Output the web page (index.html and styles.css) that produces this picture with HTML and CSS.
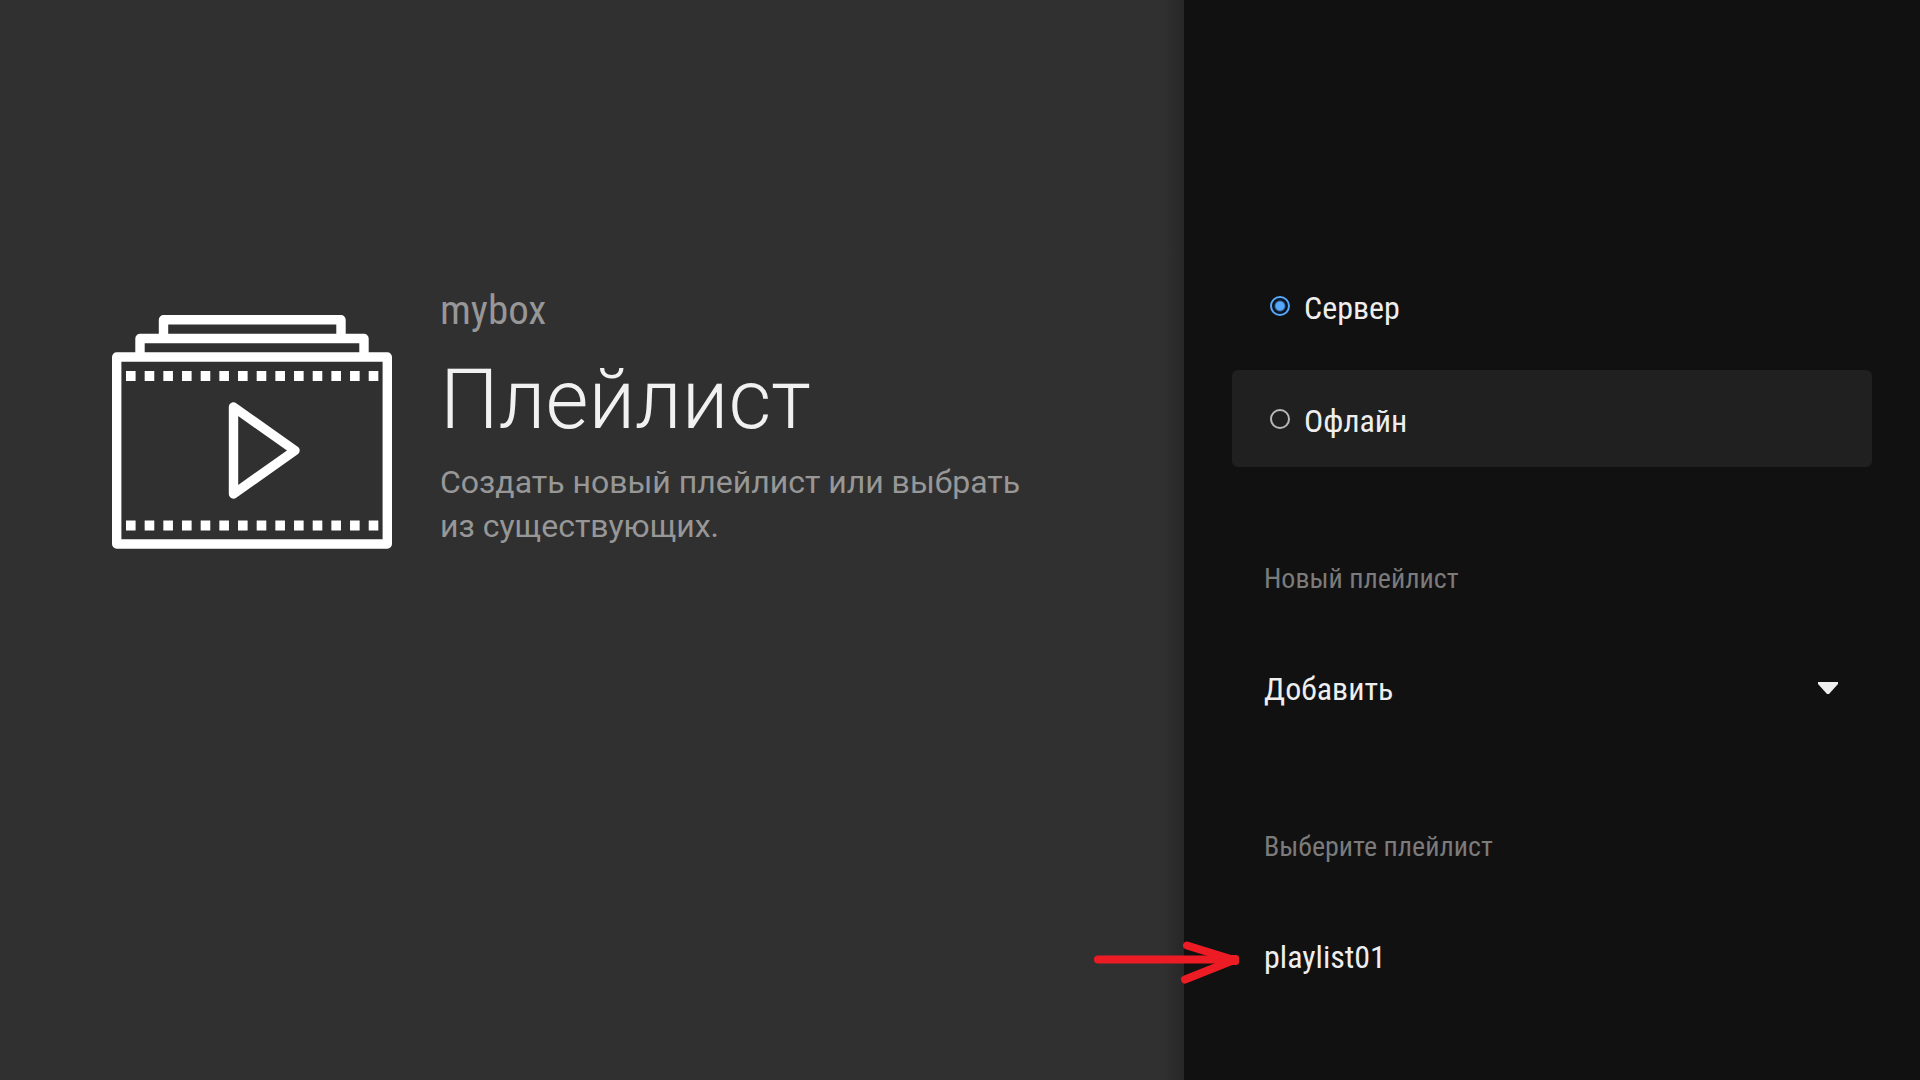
FILE: index.html
```html
<!DOCTYPE html>
<html lang="ru">
<head>
<meta charset="utf-8">
<meta name="viewport" content="width=device-width, initial-scale=1">
<title>Плейлист</title>
<link rel="stylesheet" href="styles.css">
</head>
<body>
<main class="screen">
  <section class="guidance">
    <svg class="guidance-icon" viewBox="0 0 280 234" aria-hidden="true">
      <g fill="none" stroke="#fff" stroke-width="9.4" stroke-linejoin="round">
        <path d="M51.500 19V4.700H229V19M28 38V23.500H252V38"/>
        <rect x="4.700" y="42" width="270.600" height="187"/>
        <path d="M121.500 92V179L183 135.500Z"/>
      </g>
      <path d="M14 61H270M14 210.500H270" stroke="#fff" stroke-width="10" stroke-dasharray="9.6 9.070"/>
    </svg>
    <div class="guidance-text">
      <p class="breadcrumb">mybox</p>
      <h1 class="title">Плейлист</h1>
      <p class="description">Создать новый плейлист или выбрать из существующих.</p>
    </div>
  </section>
  <form class="actions">
    <label class="action"><input class="radio" type="radio" name="mode" checked><span>Сервер</span></label>
    <label class="action action-focused"><input class="radio" type="radio" name="mode"><span>Офлайн</span></label>
    <h2 class="heading">Новый плейлист</h2>
    <button class="action" type="button"><span>Добавить</span>
      <svg class="caret" viewBox="0 0 20 12" aria-hidden="true"><path d="M0 0H20V2L11 12H9L0 2Z" fill="#eee"/></svg>
    </button>
    <h2 class="heading">Выберите плейлист</h2>
    <div class="pointed">
      <button class="action" type="button"><span>playlist01</span></button>
      <svg class="pointer" viewBox="0 0 148 44" aria-hidden="true"><g fill="none" stroke="#ed1c24" stroke-linecap="round" stroke-linejoin="round"><path d="M5 19.500H140" stroke-width="8"/><path d="M94 5.500L141 20L92 39.500" stroke-width="8"/></g><rect x="134" y="15" width="12" height="10" rx="3" fill="#ed1c24"/></svg>
    </div>
  </form>
</main>
</body>
</html>
```
FILE: styles.css
```css
* { box-sizing: border-box; }

body {
  margin: 0;
  background: #303030;
  color: #eee;
  font-family: "Roboto Condensed", Roboto, sans-serif;
}

.screen {
  display: grid;
  grid-template-columns: minmax(0, 1184fr) minmax(0, 736fr);
  min-height: 100vh;
}

.guidance {
  display: flex;
  align-items: flex-start;
  gap: 48px;
  padding: 284px 112px 48px;
  background: linear-gradient(to left, #272727, #303030 20px);
}

.guidance-icon {
  flex: none;
  width: 280px;
  margin-top: 31px;
}

.guidance-text { max-width: 600px; }

.breadcrumb,
.title,
.description,
.heading {
  margin: 0;
  font-weight: 400;
}

.breadcrumb {
  color: #979797;
  font-size: 41px;
  line-height: 52px;
}

.title {
  margin: 14px 0 10px;
  color: #f1f1f1;
  font-family: Roboto, sans-serif;
  font-size: 83px;
  font-weight: 300;
  line-height: 100px;
}

.description {
  color: #979797;
  font-family: Roboto, sans-serif;
  font-size: 32px;
  line-height: 44px;
}

.actions {
  display: flex;
  flex-direction: column;
  gap: 16px;
  padding: 257px 48px 48px;
  background: #111;
}

.action {
  display: flex;
  align-items: center;
  width: 100%;
  min-height: 97px;
  padding: 4px 32px 0;
  border: 0;
  border-radius: 6px;
  background: none;
  color: inherit;
  font: inherit;
  font-size: 32px;
  line-height: 40px;
  text-align: left;
}

.action-focused { background: #202020; }

.radio {
  appearance: none;
  flex: none;
  width: 20px;
  height: 20px;
  margin: 0 14px 4px 6px;
  border: 2px solid #b8b8b8;
  border-radius: 50%;
}

.radio:checked {
  border-color: #55a8fb;
  background: radial-gradient(circle, #55a8fb 4px, #0b1420 6px);
}

.heading {
  padding: 82px 32px 29px;
  color: #7b7b7b;
  font-size: 28px;
  line-height: 28px;
}

.caret {
  width: 20px;
  margin: 0 2px 2px auto;
}

.pointed { position: relative; }

.pointer {
  position: absolute;
  top: 34px;
  right: calc(100% - 9px);
  width: 148px;
}
```
